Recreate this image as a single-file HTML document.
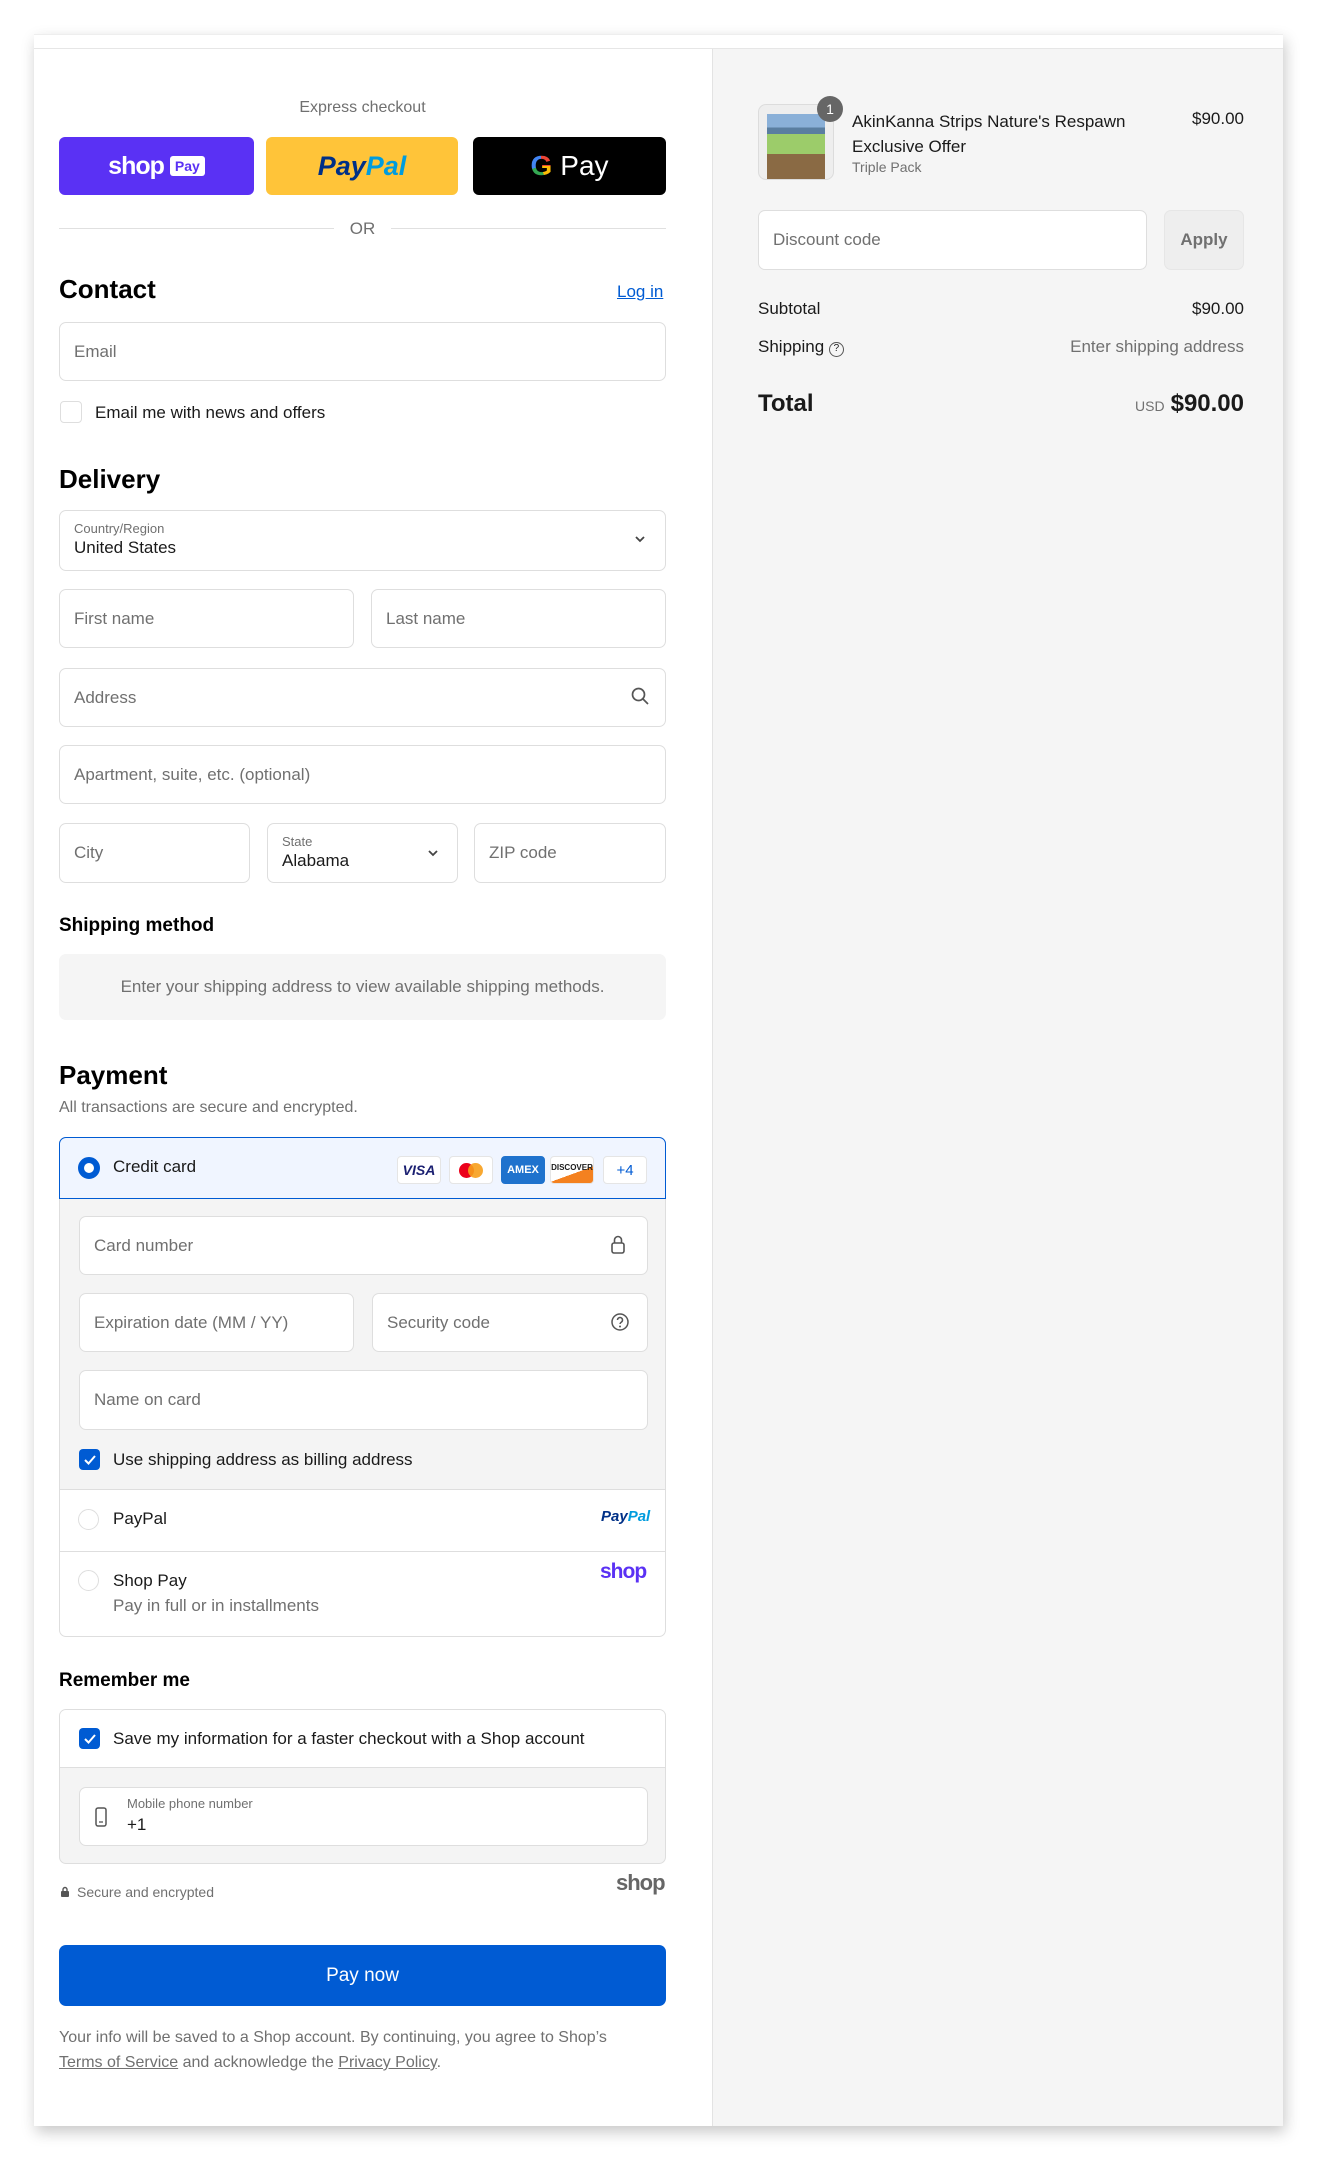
<!DOCTYPE html>
<html><head><meta charset="utf-8"><style>
*{box-sizing:border-box;margin:0;padding:0}
body{width:1323px;height:2170px;background:#fff;font-family:"Liberation Sans",sans-serif;color:#1a1a1a;position:relative;overflow:hidden}
.a{position:absolute}
.card{left:34px;top:34px;width:1249px;height:2092px;background:#fff;box-shadow:2px 6px 14px rgba(0,0,0,.22);border-top:1px solid #eee}
.inp{position:absolute;border:1px solid #dedede;border-radius:7px;background:#fff;font-size:17px;color:#707070;padding-left:14px;display:flex;align-items:center}
.h{position:absolute;font-size:26px;font-weight:bold;color:#000}
.h2{position:absolute;font-size:19px;font-weight:bold;color:#000}
.t{position:absolute;font-size:17px}
.g{color:#707070}
.cb{position:absolute;width:21px;height:21px;border-radius:4px;background:#005bd3;display:flex;align-items:center;justify-content:center}
.rad{position:absolute;width:21px;height:21px;border-radius:50%;border:1px solid #dedede;background:#fff}
.logo{position:absolute;top:1154px;width:44px;height:28px;background:#fff;border:1px solid #e5e5e5;border-radius:4px;font-size:12px;font-weight:bold;display:flex;align-items:center;justify-content:center}
</style></head><body>
<div class="a card"></div>
<div class="a" style="left:34px;top:48px;width:1249px;height:1px;background:#e6e6e6"></div>
<div class="a" style="left:712px;top:49px;width:571px;height:2077px;background:#f5f5f5;border-left:1px solid #e3e3e3"></div>

<div class="t g" style="left:59px;width:607px;text-align:center;top:99px;font-size:16px">Express checkout</div>
<div class="a" style="left:59px;top:137px;width:195px;height:58px;background:#5a31f4;border-radius:6px;display:flex;align-items:center;justify-content:center;gap:6px"><span style="color:#fff;font-weight:bold;font-size:25px;letter-spacing:-1px">shop</span><span style="background:#fff;color:#5a31f4;font-weight:bold;font-size:14px;padding:2px 5px;border-radius:3px">Pay</span></div>
<div class="a" style="left:266px;top:137px;width:192px;height:58px;background:#ffc439;border-radius:6px;display:flex;align-items:center;justify-content:center;font-size:27px;font-weight:bold;font-style:italic"><span style="color:#003087">Pay</span><span style="color:#009cde">Pal</span></div>
<div class="a" style="left:473px;top:137px;width:193px;height:58px;background:#000;border-radius:6px;display:flex;align-items:center;justify-content:center;gap:8px;color:#fff;font-size:28px"><span style="font-weight:bold;background:conic-gradient(#ea4335 0 25%,#fbbc05 0 45%,#34a853 0 70%,#4285f4 0);-webkit-background-clip:text;color:transparent">G</span>Pay</div>
<div class="a" style="left:59px;top:228px;width:275px;height:1px;background:#e0e0e0"></div>
<div class="a" style="left:391px;top:228px;width:275px;height:1px;background:#e0e0e0"></div>
<div class="t g" style="left:340px;width:45px;text-align:center;top:219px;font-size:17px">OR</div>

<div class="h" style="left:59px;top:274px">Contact</div>
<div class="t" style="left:617px;top:282px;color:#005bd3;text-decoration:underline">Log in</div>
<div class="inp" style="left:59px;top:322px;width:607px;height:59px">Email</div>
<div class="a" style="left:60px;top:401px;width:22px;height:22px;border:1px solid #dedede;border-radius:4px"></div>
<div class="t" style="left:95px;top:403px">Email me with news and offers</div>

<div class="h" style="left:59px;top:464px">Delivery</div>
<div class="inp" style="left:59px;top:510px;width:607px;height:61px;display:block;padding-top:10px"><div style="font-size:13px">Country/Region</div><div style="color:#1a1a1a;font-size:17px;margin-top:2px">United States</div></div>
<svg class="a" style="left:633px;top:534px" width="14" height="10" viewBox="0 0 14 10"><path d="M3 3l4 4 4-4" stroke="#444" stroke-width="1.8" fill="none"/></svg>
<div class="inp" style="left:59px;top:589px;width:295px;height:59px">First name</div>
<div class="inp" style="left:371px;top:589px;width:295px;height:59px">Last name</div>
<div class="inp" style="left:59px;top:668px;width:607px;height:59px">Address</div>
<svg class="a" style="left:630px;top:686px" width="20" height="20" viewBox="0 0 20 20"><circle cx="8.5" cy="8.5" r="6" stroke="#555" stroke-width="1.7" fill="none"/><path d="M13 13l5 5" stroke="#555" stroke-width="1.7"/></svg>
<div class="inp" style="left:59px;top:745px;width:607px;height:59px">Apartment, suite, etc. (optional)</div>
<div class="inp" style="left:59px;top:823px;width:191px;height:60px">City</div>
<div class="inp" style="left:267px;top:823px;width:191px;height:60px;display:block;padding-top:10px"><div style="font-size:13px">State</div><div style="color:#1a1a1a;margin-top:2px">Alabama</div></div>
<svg class="a" style="left:426px;top:848px" width="14" height="10" viewBox="0 0 14 10"><path d="M3 3l4 4 4-4" stroke="#444" stroke-width="1.8" fill="none"/></svg>
<div class="inp" style="left:474px;top:823px;width:192px;height:60px">ZIP code</div>

<div class="h2" style="left:59px;top:915px">Shipping method</div>
<div class="a" style="left:59px;top:954px;width:607px;height:66px;background:#f5f5f5;border-radius:7px;display:flex;align-items:center;justify-content:center;font-size:17px;color:#707070">Enter your shipping address to view available shipping methods.</div>

<div class="h" style="left:59px;top:1060px">Payment</div>
<div class="t g" style="left:59px;top:1099px;font-size:16px">All transactions are secure and encrypted.</div>
<div class="a" style="left:59px;top:1137px;width:607px;height:500px;border:1px solid #dedede;border-radius:7px;background:#fff"></div>
<div class="a" style="left:59px;top:1198px;width:607px;height:291px;background:#f4f4f4;border-left:1px solid #dedede;border-right:1px solid #dedede"></div>
<div class="a" style="left:59px;top:1137px;width:607px;height:62px;border:1px solid #005bd3;border-radius:7px 7px 0 0;background:#f0f5ff"></div>
<div class="a" style="left:78px;top:1157px;width:22px;height:22px;border-radius:50%;border:6px solid #005bd3;background:#fff"></div>
<div class="t" style="left:113px;top:1157px">Credit card</div>
<div class="logo" style="left:397px;top:1156px;color:#1a1f71;font-style:italic;font-size:14px">VISA</div>
<div class="logo" style="left:449px;top:1156px"><span style="width:15px;height:15px;border-radius:50%;background:#eb001b;display:inline-block"></span><span style="width:15px;height:15px;border-radius:50%;background:#f79e1b;display:inline-block;margin-left:-6px;opacity:.9"></span></div>
<div class="logo" style="left:501px;top:1156px;background:#1f72cd;color:#fff;border-color:#1f72cd;font-size:11px">AMEX</div>
<div class="logo" style="left:550px;top:1156px;font-size:8px;align-items:flex-start;padding-top:6px;background:linear-gradient(160deg,#fff 60%,#f48120 60%)">DISCOVER</div>
<div class="logo" style="left:603px;top:1156px;color:#005bd3;font-weight:normal;font-size:15px">+4</div>

<div class="inp" style="left:79px;top:1216px;width:569px;height:59px">Card number</div>
<svg class="a" style="left:610px;top:1234px" width="16" height="22" viewBox="0 0 16 22"><rect x="2" y="9" width="12" height="10" rx="2" stroke="#555" stroke-width="1.6" fill="none"/><path d="M4.5 9V6a3.5 3.5 0 017 0v3" stroke="#555" stroke-width="1.6" fill="none"/></svg>
<div class="inp" style="left:79px;top:1293px;width:275px;height:59px">Expiration date (MM / YY)</div>
<div class="inp" style="left:372px;top:1293px;width:276px;height:59px">Security code</div>
<svg class="a" style="left:610px;top:1312px" width="20" height="20" viewBox="0 0 20 20"><circle cx="10" cy="10" r="8" stroke="#555" stroke-width="1.5" fill="none"/><path d="M7.5 8a2.5 2.5 0 114 2c-1 .7-1.5 1-1.5 2" stroke="#555" stroke-width="1.5" fill="none"/><circle cx="10" cy="14.5" r="1" fill="#555"/></svg>
<div class="inp" style="left:79px;top:1370px;width:569px;height:60px">Name on card</div>
<div class="cb" style="left:79px;top:1449px"><svg width="14" height="12" viewBox="0 0 14 12"><path d="M2 6l3.5 3.5L12 2" stroke="#fff" stroke-width="2" fill="none"/></svg></div>
<div class="t" style="left:113px;top:1450px">Use shipping address as billing address</div>
<div class="a" style="left:59px;top:1489px;width:607px;height:1px;background:#dedede"></div>
<div class="rad" style="left:78px;top:1509px"></div>
<div class="t" style="left:113px;top:1509px">PayPal</div>
<div class="a" style="left:601px;top:1508px;font-size:15px;font-weight:bold;font-style:italic"><span style="color:#003087">Pay</span><span style="color:#009cde">Pal</span></div>
<div class="a" style="left:59px;top:1551px;width:607px;height:1px;background:#dedede"></div>
<div class="rad" style="left:78px;top:1570px"></div>
<div class="t" style="left:113px;top:1571px">Shop Pay</div>
<div class="t g" style="left:113px;top:1596px">Pay in full or in installments</div>
<div class="a" style="left:600px;top:1560px;font-size:21px;font-weight:bold;color:#5a31f4;letter-spacing:-1px">shop</div>

<div class="h2" style="left:59px;top:1670px">Remember me</div>
<div class="a" style="left:59px;top:1709px;width:607px;height:155px;border:1px solid #dedede;border-radius:7px;background:#f4f4f4;overflow:hidden"><div style="height:58px;background:#fff;border-bottom:1px solid #dedede"></div></div>
<div class="cb" style="left:79px;top:1728px"><svg width="14" height="12" viewBox="0 0 14 12"><path d="M2 6l3.5 3.5L12 2" stroke="#fff" stroke-width="2" fill="none"/></svg></div>
<div class="t" style="left:113px;top:1729px">Save my information for a faster checkout with a Shop account</div>
<div class="inp" style="left:79px;top:1787px;width:569px;height:59px"></div>
<svg class="a" style="left:94px;top:1806px" width="14" height="22" viewBox="0 0 14 22"><rect x="2" y="2" width="10" height="18" rx="2" stroke="#555" stroke-width="1.5" fill="none"/><path d="M5 16h4" stroke="#555" stroke-width="1.3"/></svg>
<div class="t g" style="left:127px;top:1796px;font-size:13px">Mobile phone number</div>
<div class="t" style="left:127px;top:1815px">+1</div>
<svg class="a" style="left:60px;top:1886px" width="10" height="12" viewBox="0 0 10 12"><rect x="1" y="5" width="8" height="6" rx="1" fill="#555"/><path d="M3 5V3.5a2 2 0 014 0V5" stroke="#555" stroke-width="1.4" fill="none"/></svg>
<div class="t g" style="left:77px;top:1884px;font-size:14px">Secure and encrypted</div>
<div class="a" style="left:616px;top:1870px;font-size:22px;font-weight:bold;color:#666;letter-spacing:-1px">shop</div>

<div class="a" style="left:59px;top:1945px;width:607px;height:61px;background:#005bd3;border-radius:7px;color:#fff;font-size:19px;display:flex;align-items:center;justify-content:center">Pay now</div>
<div class="t g" style="left:59px;top:2025px;font-size:16px;line-height:25px;width:600px">Your info will be saved to a Shop account. By continuing, you agree to Shop’s<br><u>Terms of Service</u> and acknowledge the <u>Privacy Policy</u>.</div>

<div class="a" style="left:758px;top:104px;width:76px;height:76px;border:1px solid #dcdcdc;border-radius:8px;background:#eee;overflow:hidden"><div style="margin:9px 8px;height:67px;background:linear-gradient(#8ab0d8 0 20%,#5a7ea0 20% 30%,#9ccc6a 30% 60%,#8a6a44 60%)"></div></div>
<div class="a" style="left:817px;top:96px;width:26px;height:26px;border-radius:50%;background:#666;color:#fff;font-size:14px;display:flex;align-items:center;justify-content:center">1</div>
<div class="t" style="left:852px;top:109px;line-height:25px">AkinKanna Strips Nature's Respawn<br>Exclusive Offer</div>
<div class="t g" style="left:852px;top:159px;font-size:14px">Triple Pack</div>
<div class="t" style="left:1160px;top:109px;width:84px;text-align:right">$90.00</div>
<div class="inp" style="left:758px;top:210px;width:389px;height:60px">Discount code</div>
<div class="a" style="left:1164px;top:210px;width:80px;height:60px;border:1px solid #e6e6e6;border-radius:7px;background:#eee;color:#707070;font-weight:bold;font-size:17px;display:flex;align-items:center;justify-content:center">Apply</div>
<div class="t" style="left:758px;top:299px">Subtotal</div>
<div class="t" style="left:1144px;top:299px;width:100px;text-align:right">$90.00</div>
<div class="t" style="left:758px;top:337px">Shipping <span style="display:inline-block;width:15px;height:15px;border:1.5px solid #555;border-radius:50%;font-size:10px;text-align:center;line-height:12px;vertical-align:1px">?</span></div>
<div class="t g" style="left:944px;top:337px;width:300px;text-align:right">Enter shipping address</div>
<div class="a" style="left:758px;top:390px;font-size:24px;font-weight:bold">Total</div>
<div class="a" style="left:1000px;top:390px;width:244px;text-align:right;font-size:24px;font-weight:bold"><span style="font-size:14px;font-weight:normal;color:#707070;margin-right:6px">USD</span>$90.00</div>
</body></html>
